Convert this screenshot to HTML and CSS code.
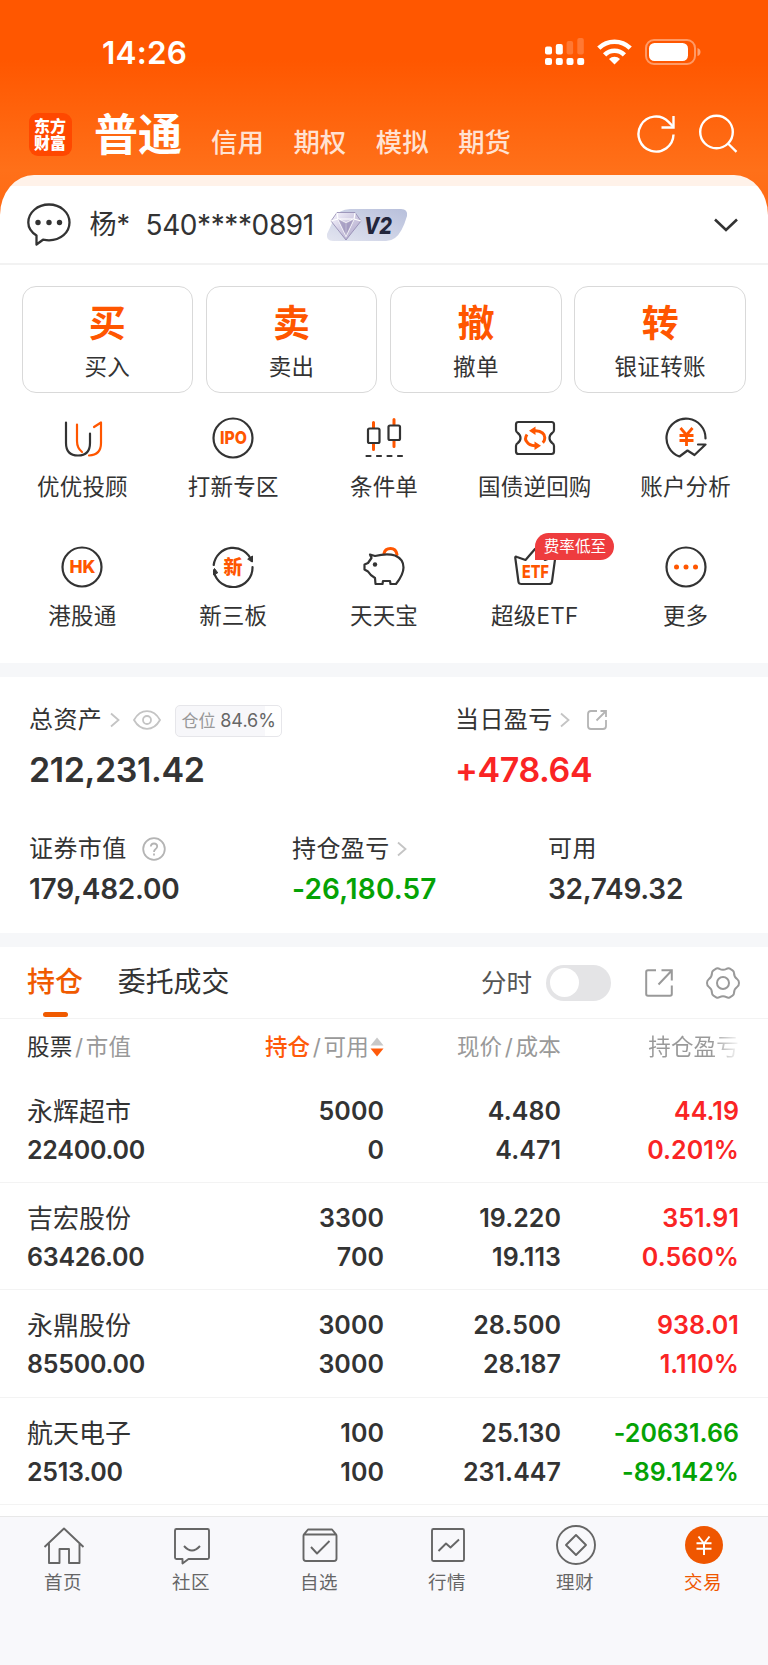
FILE: index.html
```html
<!DOCTYPE html>
<html lang="zh-CN">

<head>
  <meta charset="UTF-8">
  <meta name="viewport" content="width=device-width, initial-scale=1.0">
  <title>交易</title>
  <link rel="stylesheet" href="styles.css">
</head>

<body>
  <div class="app">
    <header class="top">
      <div class="status">
        <span class="time">14:26</span>
        <div class="status-icons">
          <svg width="40" height="28" viewBox="0 0 40 28" fill="#fff">
            <rect x="0" y="8.5" width="7" height="8" rx="2" />
            <rect x="10.8" y="6" width="7" height="10.5" rx="2" />
            <rect x="21.6" y="3" width="6.5" height="13.5" rx="2" opacity=".2" />
            <rect x="32.3" y="0" width="6.5" height="16.5" rx="2" opacity=".2" />
            <rect x="0" y="20" width="7" height="7" rx="2" />
            <rect x="10.8" y="20" width="7" height="7" rx="2" />
            <rect x="21.5" y="20" width="7" height="7" rx="2" />
            <rect x="32.2" y="20" width="7" height="7" rx="2" />
          </svg>
          <svg class="wifi" width="35" height="26" viewBox="0 0 35 26" fill="none" stroke="#fff" stroke-width="4.6">
            <path d="M1.8 9.2a22.5 22.5 0 0 1 31.4 0" />
            <path d="M7.6 15.8a14 14 0 0 1 19.8 0" />
            <path d="M12 20a8 8 0 0 1 11 0L17.5 25.5z" fill="#fff" stroke="none" />
          </svg>
          <svg class="battery" width="57" height="26" viewBox="0 0 57 26">
            <rect x="1" y="1" width="49" height="24" rx="8" fill="none" stroke="#fff" stroke-opacity=".4" stroke-width="2" />
            <rect x="4" y="4" width="39" height="18" rx="5.5" fill="#fff" />
            <path d="M52.5 9c4 1.2 4 7 0 8z" fill="#fff" opacity=".45" />
          </svg>
        </div>
      </div>
      <nav class="markets">
        <div class="logo">东方财富</div>
        <span class="market active">普通</span>
        <span class="market">信用</span>
        <span class="market">期权</span>
        <span class="market">模拟</span>
        <span class="market">期货</span>
        <svg class="refresh" width="40" height="40" viewBox="0 0 40 40" fill="none" stroke="#fff" stroke-width="2.4">
          <path d="M37.5 20.5A17.5 17.5 0 1 1 32.5 7.8L37 12.5" />
          <path d="M37.5 2v11.5H25.5" />
        </svg>
        <svg width="40" height="40" viewBox="0 0 40 40" fill="none" stroke="#fff" stroke-width="2.4">
          <circle cx="18.5" cy="18" r="16.3" />
          <path d="M30 29.5l8.5 8.3" />
        </svg>
      </nav>
    </header>

    <section class="account">
      <svg width="44" height="44" viewBox="0 0 44 44" fill="none" stroke="#333" stroke-width="2.3" stroke-linejoin="round">
        <path d="M9.5 32.5C4 29 1.3 24.5 1.3 19.5C1.3 9.5 10.500 1.500 22 1.500S42.500 9.500 42.500 19.500S33.500 37.300 22 37.300C20 37.300 18 37 16 36.700L9.500 41.500Z" />
        <g fill="#333" stroke="none">
          <circle cx="11" cy="19.5" r="2.7" />
          <circle cx="22" cy="19.5" r="2.7" />
          <circle cx="32.5" cy="19.5" r="2.7" />
        </g>
      </svg>
      <span class="account-name">杨*</span>
      <span class="account-no">540****0891</span>
      <svg class="level" width="82" height="32" viewBox="0 0 82 32">
        <defs>
          <linearGradient id="badge" x1="0" y1="1" x2="1" y2="0">
            <stop offset="0" stop-color="#e3e5f0" />
            <stop offset="1" stop-color="#b7bfdb" />
          </linearGradient>
          <linearGradient id="gem" x1="0" y1="0" x2="1" y2="1">
            <stop offset="0" stop-color="#f8f6ff" />
            <stop offset="1" stop-color="#a79fc4" />
          </linearGradient>
        </defs>
        <path d="M24 0H75q7 0 6 7Q76 24 69 29q-4 3-9 3H7q-7 0-6-7L8 10Q13 0 24 0z" fill="url(#badge)" />
        <path d="M11 3.500H29L35 12L20 31L5 12z" fill="url(#gem)" stroke="#8f86ae" stroke-width=".8" />
        <path d="M11 4l1 6 8 17 8-17 1-6M12 10h16M12 10l8 4 8-4M5 12l7-2M35 12l-7-2M20 14v13" fill="none" stroke="#fff" stroke-width="1.2" />
        <path d="M12 10l8 4 8-4-8 17z" fill="#857aa9" opacity=".55" />
        <text class="level-text" x="38" y="24.5" textLength="28" lengthAdjust="spacingAndGlyphs">V2</text>
      </svg>
      <svg class="expand" width="24" height="14" viewBox="0 0 24 14" fill="none" stroke="#333" stroke-width="2.6">
        <path d="M1 1.5l11 10.5L23 1.5" />
      </svg>
    </section>

    <section class="actions">
      <div class="action"><b>买</b><span>买入</span></div>
      <div class="action"><b>卖</b><span>卖出</span></div>
      <div class="action"><b>撤</b><span>撤单</span></div>
      <div class="action"><b>转</b><span>银证转账</span></div>
    </section>

    <section class="tools">
      <div class="tool">
        <svg class="icon" viewBox="0 0 42 42">
          <path d="M5 5.5V26q0 12.5 12 12.5T29 26V16.5" />
          <path class="hot" d="M16 7.5V24q0 7 5 11M33 10l7-4.5V26q0 12-12 12.5" />
        </svg>
        <span>优优投顾</span>
      </div>
      <div class="tool">
        <svg class="icon" viewBox="0 0 42 42">
          <circle cx="21" cy="21" r="19.5" />
          <text x="21.5" y="27.2" font-size="18" textLength="27" lengthAdjust="spacingAndGlyphs">IPO</text>
        </svg>
        <span>打新专区</span>
      </div>
      <div class="tool">
        <svg class="icon" viewBox="0 0 42 42">
          <path class="hot" stroke-width="3" d="M10.5 5.5v5M10.5 27v5.5M31 2.5v5M31 24v5.5" />
          <rect x="5" y="11.5" width="11.5" height="14.5" rx="1.5" />
          <rect x="25.5" y="8.5" width="11.5" height="14.5" rx="1.5" />
          <path d="M3.5 39h37" stroke-dasharray="4 6.5" />
        </svg>
        <span>条件单</span>
      </div>
      <div class="tool">
        <svg class="icon" viewBox="0 0 42 42">
          <path d="M4.500 5h33q2.500 0 2.500 2.500V13q0 2-1.800 3-2.700 2-2.700 5t2.700 5q1.800 1 1.800 3v5.500q0 2.500-2.500 2.500h-33Q2 37 2 34.500V29q0-2 1.800-3 2.700-2 2.700-5t-2.700-5Q2 15 2 13V7.500Q2 5 4.500 5z" />
          <path class="hot" stroke-width="3" stroke-linecap="butt" d="M13 17.500q-3 4.500 0 7.500 2 3.500 8 3.700M18.500 13.700h3q9 .6 9.300 7 0 3-2 5" />
          <path class="fill" d="M21.5 9.5v8.5l-6.5-4.3zM20.5 24.5V33l6.500-4.3z" />
        </svg>
        <span>国债逆回购</span>
      </div>
      <div class="tool">
        <svg class="icon" viewBox="0 0 42 42">
          <path d="M40.5 21.5A19.5 19.5 0 1 0 14.5 39.5L22.5 33.5L29.5 38L40.5 27.5H33" />
          <path class="hot" stroke-width="2.8" stroke-linecap="butt" d="M15.5 11l6 7 6-7M21.5 17v12M14.5 18.5h14M14.5 23.5h14" />
        </svg>
        <span>账户分析</span>
      </div>
      <div class="tool">
        <svg class="icon" viewBox="0 0 42 42">
          <circle cx="21" cy="21" r="19.5" />
          <text x="21.5" y="27.2" font-size="18" textLength="26" lengthAdjust="spacingAndGlyphs">HK</text>
        </svg>
        <span>港股通</span>
      </div>
      <div class="tool">
        <svg class="icon" viewBox="0 0 42 42">
          <path d="M1.7 19A19.5 19.5 0 0 1 39.5 15M40.5 21A19.5 19.5 0 0 1 2 26" />
          <path class="dark" stroke-width="1" d="M36 13l4.5-3v5.5zM1.5 28.5v-4.5l1-1.5 3 4z" />
          <text x="21" y="27.8" font-size="19">新</text>
        </svg>
        <span>新三板</span>
      </div>
      <div class="tool">
        <svg class="icon" viewBox="0 0 42 42">
          <path class="hot" stroke-width="3" d="M21 7.5q1-5 6.5-5T34 8.5" />
          <path d="M7 8.5l5 1.500q12-3 20-.5 8.500 3.500 8.500 12 0 7-7.500 16.500H27.500l-.5-3H20l-.5 3H12.500l-.5-6Q7 29 5 25.500L1.500 23.500V18.500L5 17l3.500-5z" />
          <circle class="dark" cx="12" cy="18.5" r="2.2" stroke="none" />
        </svg>
        <span>天天宝</span>
      </div>
      <div class="tool">
        <svg class="icon" viewBox="0 0 42 42">
          <path d="M4.5 36L1.3 12Q1 10 3 11L11.5 14 21 3 31 14 39.5 11Q41.5 10 41.2 12L38 35.5Q37.7 38 35 38H7.5Q4.7 38 4.5 36z" />
          <text x="21.5" y="31.5" font-size="18" textLength="27" lengthAdjust="spacingAndGlyphs">ETF</text>
        </svg>
        <span>超级ETF</span>
        <em class="tag">费率低至</em>
      </div>
      <div class="tool">
        <svg class="icon" viewBox="0 0 42 42">
          <circle cx="21" cy="21" r="19.5" />
          <g class="fill">
            <circle cx="11.5" cy="21" r="2.5" />
            <circle cx="21" cy="21" r="2.5" />
            <circle cx="30.5" cy="21" r="2.5" />
          </g>
        </svg>
        <span>更多</span>
      </div>
    </section>

    <section class="assets">
      <div class="assets-main">
        <div class="asset">
          <div class="label">
            总资产
            <svg class="arrow" width="10" height="16" viewBox="0 0 10 16"><path d="M1 1.5l7.5 6.5L1 14.5" /></svg>
            <svg class="eye" width="28" height="20" viewBox="0 0 28 20">
              <path d="M1 10Q6 1.2 14 1.2T27 10Q22 18.8 14 18.8T1 10z" />
              <circle cx="14" cy="10" r="4" />
            </svg>
            <span class="position">仓位 <i>84.6%</i></span>
          </div>
          <strong>212,231.42</strong>
        </div>
        <div class="asset">
          <div class="label">
            当日盈亏
            <svg class="arrow" width="10" height="16" viewBox="0 0 10 16"><path d="M1 1.5l7.5 6.5L1 14.5" /></svg>
            <svg class="share-small" width="22" height="22" viewBox="0 0 22 22">
              <path d="M11 2H5Q2 2 2 5V17q0 3 3 3H17q3 0 3-3V11M10.5 11.5L20 2M14.5 2H20V8" />
            </svg>
          </div>
          <strong class="up">+478.64</strong>
        </div>
      </div>
      <div class="assets-sub">
        <div class="asset">
          <div class="label">
            证券市值
            <svg class="help" width="24" height="24" viewBox="0 0 24 24">
              <circle cx="12" cy="12" r="10.8" />
              <path d="M8.8 9.5Q9 6.5 12 6.5t3.2 2.7Q15.2 11 13.4 12.2 12 13.2 12 15M12 16.5v2" />
            </svg>
          </div>
          <strong>179,482.00</strong>
        </div>
        <div class="asset">
          <div class="label">
            持仓盈亏
            <svg class="arrow" width="10" height="16" viewBox="0 0 10 16"><path d="M1 1.5l7.5 6.5L1 14.5" /></svg>
          </div>
          <strong class="down">-26,180.57</strong>
        </div>
        <div class="asset">
          <div class="label">可用</div>
          <strong>32,749.32</strong>
        </div>
      </div>
    </section>

    <section class="holdings">
      <div class="tabs">
        <span class="tab selected">持仓</span>
        <span class="tab">委托成交</span>
        <span class="switch-label">分时</span>
        <span class="switch"></span>
        <svg class="share" width="28" height="28" viewBox="0 0 28 28">
          <path d="M11 1.2H3Q1.2 1.2 1.2 3V25q0 1.8 1.8 1.8H25q1.8 0 1.8-1.8V16.5M13.5 15.5L26.8 1.5M16.5 1.2H26.8V11.5" />
        </svg>
        <svg class="gear" width="34" height="32" viewBox="0 0 34 32">
          <path d="M10.5 1.5Q12 .8 13.5 1.8 17 3.8 20.5 1.8 22 .8 23.5 1.5L26.5 3.3Q28 4.3 28 6 28 10 31.3 12.3 33 13.5 33 16T31.3 19.7Q28 22 28 26 28 27.7 26.5 28.7L23.5 30.5Q22 31.2 20.5 30.2 17 28.2 13.5 30.2 12 31.2 10.5 30.5L7.5 28.7Q6 27.7 6 26 6 22 2.7 19.7 1 18.5 1 16T2.7 12.3Q6 10 6 6 6 4.3 7.5 3.3z" />
          <circle cx="17" cy="16" r="6" />
        </svg>
      </div>
      <div class="row head">
        <span class="col-name"><b>股票</b><s>/</s>市值</span>
        <span class="col-amount"><b class="sorted">持仓</b><s>/</s>可用<svg width="14" height="20" viewBox="0 0 14 20"><path d="M7 .5l6.500 8H.5z" fill="#c8c8c8" /><path d="M.5 11.500h13l-6.500 8z" fill="#ff5a0a" /></svg></span>
        <span class="col-price">现价<s>/</s>成本</span>
        <span class="col-profit">持仓盈亏</span>
      </div>
      <div class="row">
        <div class="col-name"><span>永辉超市</span>22400.00</div>
        <div class="col-amount">5000<br>0</div>
        <div class="col-price">4.480<br>4.471</div>
        <div class="col-profit up">44.19<br>0.201%</div>
      </div>
      <div class="row">
        <div class="col-name"><span>吉宏股份</span>63426.00</div>
        <div class="col-amount">3300<br>700</div>
        <div class="col-price">19.220<br>19.113</div>
        <div class="col-profit up">351.91<br>0.560%</div>
      </div>
      <div class="row">
        <div class="col-name"><span>永鼎股份</span>85500.00</div>
        <div class="col-amount">3000<br>3000</div>
        <div class="col-price">28.500<br>28.187</div>
        <div class="col-profit up">938.01<br>1.110%</div>
      </div>
      <div class="row">
        <div class="col-name"><span>航天电子</span>2513.00</div>
        <div class="col-amount">100<br>100</div>
        <div class="col-price">25.130<br>231.447</div>
        <div class="col-profit down">-20631.66<br>-89.142%</div>
      </div>
    </section>

    <footer class="tabbar">
      <div class="tabbar-item">
        <svg width="42" height="42" viewBox="0 0 42 42"><path d="M1.5 22L21 3.5 40.5 22M6 18.5V38h10.5V24h9.5V38H36.5V18.5" /></svg>
        <span>首页</span>
      </div>
      <div class="tabbar-item">
        <svg width="42" height="42" viewBox="0 0 42 42"><path d="M5.5 4h31Q38 4 38 5.5V32.5Q38 34 36.5 34H17.5L11.5 38.5V34H5.5Q4 34 4 32.5V5.5Q4 4 5.5 4zM13 21q8 9 16 0" /></svg>
        <span>社区</span>
      </div>
      <div class="tabbar-item">
        <svg width="42" height="42" viewBox="0 0 42 42"><path d="M4.5 11Q4.5 10 5 9.3L9 4.5H33L37 9.3q.5.7.5 1.7V33.5Q37.5 36 35 36H7Q4.5 36 4.5 33.5zM5 9.5H37M12 22l6 6.5L30.5 16" /></svg>
        <span>自选</span>
      </div>
      <div class="tabbar-item">
        <svg width="42" height="42" viewBox="0 0 42 42"><rect x="5" y="4" width="32" height="32" rx="1.5" /><path d="M11.5 26l7.5-7.5 4.5 4L32 14.5" /></svg>
        <span>行情</span>
      </div>
      <div class="tabbar-item">
        <svg width="42" height="42" viewBox="0 0 42 42"><circle cx="21" cy="20" r="19" /><path d="M21 10L31 20 21 30 11 20z" /></svg>
        <span>理财</span>
      </div>
      <div class="tabbar-item current">
        <svg width="42" height="42" viewBox="0 0 42 42"><circle class="disc" cx="21" cy="20" r="19" /><path class="yen" d="M15.5 11.5l5.5 7 5.5-7M21 18v12M13.5 18.2h15M13.5 23.8h15" /></svg>
        <span>交易</span>
      </div>
    </footer>
  </div>
</body>

</html>
```
FILE: styles.css
```css
* {
  box-sizing: border-box;
}

body {
  margin: 0;
  font-family: Inter, "Noto Sans CJK SC", sans-serif;
  color: #333;
  background: #fff;
}

.app {
  width: 768px;
  height: 1665px;
  display: flex;
  flex-direction: column;
  background: linear-gradient(#ff5700 60px, #ff7019 170px, #ff6a14 215px, #fff 230px);
  overflow: hidden;
}

svg {
  display: block;
  flex: none;
}

/* Orange header */
.top {
  height: 175px;
  color: #fff;
}

.status {
  height: 104px;
  padding: 0 66px 0 102px;
  display: flex;
  align-items: center;
  justify-content: space-between;
}

.time {
  padding-top: 1px;
  font-size: 31.5px;
  font-weight: 600;
  line-height: 40px;
  letter-spacing: 0.2px;
}

.status-icons {
  display: flex;
  align-items: center;
}

.wifi {
  margin-left: 12px;
}

.battery {
  margin-left: 13px;
}

.markets {
  display: flex;
  align-items: center;
  height: 60px;
  padding: 0 30px 0 29px;
}

.logo {
  width: 43px;
  height: 43px;
  margin-right: 22px;
  padding: 4px 5px;
  border-radius: 9px;
  background: #ff4800;
  font-family: "Noto Sans CJK SC", sans-serif;
  font-size: 16px;
  font-weight: 900;
  line-height: 17.5px;
}

.market {
  margin-right: 29.6px;
  padding-top: 15px;
  font-size: 26.4px;
  line-height: 36px;
  font-weight: 500;
  color: rgba(255, 255, 255, 0.82);
}

.market.active {
  margin-right: 29px;
  padding: 1px 0 0;
  font-size: 44px;
  line-height: 60px;
  font-weight: 700;
  color: #fff;
}

.refresh {
  margin: 0 22px 0 auto;
}

/* Account bar */
.account {
  height: 90px;
  display: flex;
  align-items: center;
  padding: 12px 30px 0 27px;
  border-radius: 34px 34px 0 0 / 40px 40px 0 0;
  border-bottom: 2px solid #f2f2f2;
  background: linear-gradient(#fff2e9 11px, #fff 11px);
}

.account-name {
  margin-left: 18.5px;
  font-size: 27px;
  line-height: 40px;
}

.account-no {
  margin-left: 15.5px;
  font-size: 28px;
  line-height: 40px;
  letter-spacing: -0.4px;
}

.level {
  margin-left: 12.5px;
}

.level-text {
  font-size: 23px;
  font-weight: 800;
  font-style: italic;
  fill: #23263c;
}

.expand {
  margin-left: auto;
}

/* Buy / sell buttons */
.actions {
  display: grid;
  grid-template-columns: repeat(4, 1fr);
  gap: 12.6px;
  padding: 21px 22px 0 21.5px;
  background: #fff;
}

.action {
  height: 107px;
  border: 1.5px solid #d9d9d9;
  border-radius: 14px;
  display: flex;
  flex-direction: column;
  align-items: center;
}

.action b {
  margin-top: 12px;
  font-size: 37px;
  line-height: 50px;
  font-weight: 700;
  color: #ff5600;
}

.action span {
  margin-top: 1px;
  font-size: 22.5px;
  line-height: 34px;
  letter-spacing: 0.3px;
}

/* Shortcut grid */
.tools {
  display: grid;
  grid-template-columns: repeat(5, 1fr);
  grid-auto-rows: 129px;
  height: 270px;
  padding: 23.5px 7px 0;
  background: #fff;
}

.tool {
  position: relative;
  display: flex;
  flex-direction: column;
  align-items: center;
}

.tool span {
  margin-top: 10.5px;
  font-size: 22.5px;
  line-height: 36px;
  letter-spacing: 0.2px;
}

.icon {
  width: 42px;
  height: 42px;
  fill: none;
  stroke: #333;
  stroke-width: 2.2;
  stroke-linecap: round;
  stroke-linejoin: round;
}

.icon .hot {
  stroke: #ff5600;
}

.icon .fill {
  fill: #ff5600;
  stroke: none;
}

.icon .dark {
  fill: #333;
}

.icon text {
  fill: #ff5600;
  stroke: none;
  font-weight: 800;
  text-anchor: middle;
}

.tag {
  position: absolute;
  left: 76px;
  top: -13px;
  width: 79px;
  height: 27px;
  border-radius: 14px 14px 14px 0;
  background: #ee3c3e;
  color: #fff;
  font-size: 15.6px;
  font-style: normal;
  line-height: 27px;
  text-align: center;
}

/* Asset summary */
.assets {
  height: 284px;
  padding: 26px 30px 0 29px;
  border-top: 14px solid #f6f7f9;
  border-bottom: 14px solid #f6f7f9;
  background: #fff;
}

.assets-main {
  display: grid;
  grid-template-columns: 426px 1fr;
  height: 128.5px;
}

.assets-sub {
  display: grid;
  grid-template-columns: 263px 256px 1fr;
}

.label {
  display: flex;
  align-items: center;
  height: 34px;
  font-size: 24px;
  line-height: 34px;
  letter-spacing: 0.4px;
}

.label svg {
  fill: none;
  stroke: #c4c4c4;
  stroke-width: 1.8;
}

.arrow {
  margin-left: 7.5px;
}

.eye {
  margin-left: 13px;
}

.position {
  margin: 1px 0 0 14.5px;
  width: 107px;
  height: 32px;
  border: 1.5px solid #e6e6ea;
  border-radius: 5px;
  background: linear-gradient(90deg, #f7f7fa 84.6%, #fff 84.6%);
  color: #999;
  font-size: 17px;
  line-height: 30px;
  text-align: center;
  letter-spacing: 0;
  white-space: nowrap;
}

.position i {
  color: #666;
  font-size: 18px;
  font-style: normal;
}

.share-small {
  margin-left: 16px;
}

.help {
  margin-left: 15px;
}

.label .help,
.label .share-small {
  stroke: #b4b4b4;
}

.asset strong {
  display: block;
  font-weight: 600;
}

.assets-main strong {
  margin-top: 11.5px;
  font-size: 34px;
  line-height: 42px;
  letter-spacing: -0.4px;
}

.assets-sub strong {
  margin-top: 5px;
  font-size: 28px;
  line-height: 36px;
  letter-spacing: -0.25px;
}

.assets-sub .down {
  letter-spacing: 0.15px;
}

.up {
  color: #fa2424;
}

.down {
  color: #05a205;
}

/* Holdings */
.holdings {
  background: #fff;
  flex: 1;
}

.tabs {
  display: flex;
  align-items: center;
  height: 71.5px;
  padding: 1px 28px 0 27px;
  border-bottom: 1.5px solid #f3f3f3;
}

.tab {
  position: relative;
  margin-right: 35px;
  font-size: 27.9px;
  line-height: 71px;
}

.tab.selected {
  color: #f05a00;
  font-weight: 500;
}

.tab.selected::after {
  content: "";
  position: absolute;
  left: 16px;
  bottom: 1px;
  width: 25px;
  height: 5px;
  border-radius: 2.5px;
  background: #f05a00;
}

.switch-label {
  margin-left: auto;
  font-size: 25.5px;
  line-height: 70px;
  color: #555;
}

.switch {
  width: 65px;
  height: 36px;
  margin: 0 34px 0 14px;
  padding: 3.5px;
  border-radius: 18px;
  background: #e4e4e6;
}

.switch::before {
  content: "";
  display: block;
  width: 29px;
  height: 29px;
  border-radius: 50%;
  background: #fff;
}

.share,
.gear {
  fill: none;
  stroke: #999;
  stroke-width: 2;
}

.gear {
  margin-left: 33px;
}

.row {
  display: grid;
  grid-template-columns: 157px 200px 177px 178px;
  height: 107.2px;
  padding: 16px 0 0 27px;
  border-bottom: 1.5px solid #f3f3f3;
  font-size: 25px;
  line-height: 39px;
  font-weight: 600;
  letter-spacing: 0.05px;
}

.row > * {
  text-align: right;
}

.row .col-name {
  text-align: left;
  letter-spacing: -0.25px;
}

.col-name span {
  display: block;
  font-size: 26px;
  font-weight: 400;
  letter-spacing: 0;
}

.row.head {
  height: 57.5px;
  padding-top: 8.5px;
  border: 0;
  font-size: 22.5px;
  font-weight: 400;
  color: #999;
}

.row.head > * {
  letter-spacing: 0.2px;
}

.head b {
  font-weight: 400;
  color: #333;
}

.head b.sorted {
  font-weight: 500;
  color: #ff5a0a;
}

.head s {
  margin: 0 2.5px;
  text-decoration: none;
}

.head .col-amount {
  display: flex;
  align-items: center;
  justify-content: flex-end;
  height: 39px;
}

.head .col-amount svg {
  margin-left: 1px;
}

.head .col-profit {
  color: transparent;
  background: linear-gradient(90deg, #999 150px, #fff 180px);
  -webkit-background-clip: text;
  background-clip: text;
}

/* Bottom navigation */
.tabbar {
  display: grid;
  grid-template-columns: repeat(6, 1fr);
  height: 149px;
  padding: 7.5px 0 0;
  border-top: 1.5px solid #e8e8e8;
  background: #f8f8fb;
}

.tabbar-item {
  display: flex;
  flex-direction: column;
  align-items: center;
  font-size: 18.5px;
  line-height: 28px;
  letter-spacing: 0.4px;
  color: #666;
}

.tabbar-item span {
  margin-left: -2px;
}

.tabbar-item svg {
  fill: none;
  stroke: #666;
  stroke-width: 1.9;
  stroke-linejoin: round;
  margin-bottom: 1.5px;
}

.tabbar-item.current {
  color: #ef5600;
}

.tabbar-item .disc {
  fill: #ef5600;
  stroke: none;
}

.tabbar-item .yen {
  stroke: #fff;
  stroke-width: 2;
}
```
